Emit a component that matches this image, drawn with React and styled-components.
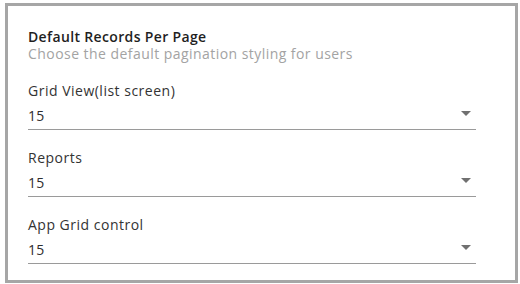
import React from "react";
import styled, { createGlobalStyle } from "styled-components";

const Global = createGlobalStyle`
  html, body { margin: 0; padding: 0; background: #ffffff; }
  body { font-family: "Open Sans", Lato, sans-serif; }
  * { box-sizing: border-box; }
`;

const Frame = styled.section`
  margin: 3px 2px 1px 5px;
  width: 513px;
  height: 280px;
  border: 3px solid #a6a6a6;
  background: #ffffff;
  padding: 23px 39px 0 20px;
  display: flex;
  flex-direction: column;
`;

const Title = styled.h2`
  margin: 0;
  font-size: 14px;
  line-height: 16px;
  font-weight: 600;
  color: #1f1f1f;
  letter-spacing: 0.35px;
`;

const Subtitle = styled.p`
  margin: 0 0 21px;
  font-size: 14px;
  line-height: 17px;
  color: #a3a3a3;
  letter-spacing: 0.45px;
`;

const Fields = styled.div`
  display: flex;
  flex-direction: column;
  gap: 20px;
`;

const Field = styled.div`
  display: flex;
  flex-direction: column;
  gap: 9px;
`;

const Label = styled.label`
  font-size: 14px;
  line-height: 16px;
  color: #333333;
  letter-spacing: 0.5px;
`;

const Select = styled.div`
  display: flex;
  align-items: center;
  justify-content: space-between;
  padding: 0 5px 5px 0;
  border-bottom: 1px solid #9a9a9a;
  font-size: 14px;
  line-height: 16px;
  color: #2e2e2e;
  letter-spacing: 0.3px;
`;

const Arrow = styled.svg`
  width: 10px;
  height: 5px;
  margin-bottom: 6px;
  fill: #707070;
`;

const fields = [
  { label: "Grid View(list screen)", value: "15" },
  { label: "Reports", value: "15" },
  { label: "App Grid control", value: "15" },
];

export default function App() {
  return (
    <>
      <Global />
      <Frame>
        <Title>Default Records Per Page</Title>
        <Subtitle>Choose the default pagination styling for users</Subtitle>
        <Fields>
          {fields.map((f) => (
            <Field key={f.label}>
              <Label>{f.label}</Label>
              <Select>
                <span>{f.value}</span>
                <Arrow viewBox="0 0 10 5">
                  <path d="M0 0h10L5 5z" />
                </Arrow>
              </Select>
            </Field>
          ))}
        </Fields>
      </Frame>
    </>
  );
}
